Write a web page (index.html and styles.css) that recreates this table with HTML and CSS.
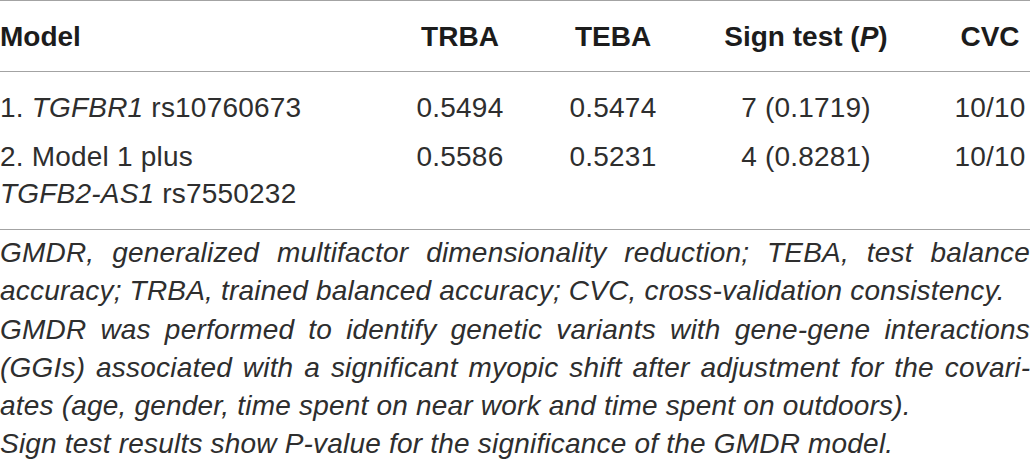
FILE: index.html
```html
<!DOCTYPE html>
<html lang="en">
<head>
<meta charset="utf-8">
<title>GMDR table</title>
<link rel="stylesheet" href="styles.css">
</head>
<body>
<div class="wrap">
  <table class="gmdr">
    <colgroup>
      <col class="c-model">
      <col class="c-trba">
      <col class="c-teba">
      <col class="c-sign">
      <col class="c-cvc">
    </colgroup>
    <thead>
      <tr>
        <th class="left">Model</th>
        <th>TRBA</th>
        <th>TEBA</th>
        <th>Sign test (<i>P</i>)</th>
        <th>CVC</th>
      </tr>
    </thead>
    <tbody>
      <tr class="r1">
        <td class="left">1. <i>TGFBR1</i> rs10760673</td>
        <td>0.5494</td>
        <td>0.5474</td>
        <td>7 (0.1719)</td>
        <td>10/10</td>
      </tr>
      <tr class="r2">
        <td class="left">2. Model 1 plus<br><i>TGFB2-AS1</i> rs7550232</td>
        <td>0.5586</td>
        <td>0.5231</td>
        <td>4 (0.8281)</td>
        <td>10/10</td>
      </tr>
    </tbody>
  </table>
  <div class="notes">
    <p>GMDR, generalized multifactor dimensionality reduction; TEBA, test balance accuracy; TRBA, trained balanced accuracy; CVC, cross-validation consistency.</p>
    <p>GMDR was performed to identify genetic variants with gene-gene interactions (GGIs) associated with a significant myopic shift after adjustment for the covari&shy;ates (age, gender, time spent on near work and time spent on outdoors).</p>
    <p>Sign test results show P-value for the significance of the GMDR model.</p>
  </div>
</div>
</body>
</html>
```

FILE: styles.css
```css
html, body {
  margin: 0;
  padding: 0;
  background: #ffffff;
}

body {
  font-family: "Liberation Sans", Arial, Helvetica, sans-serif;
  font-size: 28px;
  letter-spacing: 0.2px;
  color: #2e2e2e;
}

.wrap {
  width: 1030px;
}

.gmdr {
  width: 1030px;
  border-collapse: collapse;
  table-layout: fixed;
  line-height: 37px;
}

.c-model { width: 356px; }
.c-trba { width: 208px; }
.c-teba { width: 98px; }
.c-sign { width: 288px; }
.c-cvc { width: 80px; }

.gmdr th,
.gmdr td {
  padding: 0;
  text-align: center;
  vertical-align: top;
  white-space: nowrap;
}

.gmdr .left {
  text-align: left;
}

.gmdr thead tr {
  border-top: 1px solid #a3a3a3;
  border-bottom: 1px solid #a3a3a3;
}

.gmdr th {
  font-weight: bold;
  letter-spacing: 0;
  color: #1c1c1c;
  padding-top: 17px;
  padding-bottom: 16px;
}

.gmdr .r1 td {
  padding-top: 17px;
  padding-bottom: 5px;
}

.gmdr .r2 td {
  padding-top: 7px;
  padding-bottom: 17px;
}

.gmdr tbody tr:last-child {
  border-bottom: 1px solid #a3a3a3;
}

.notes {
  margin-top: 4px;
  font-style: italic;
  line-height: 38.3px;
  text-align: justify;
  hyphens: manual;
}

.notes p {
  margin: 0;
}
```
